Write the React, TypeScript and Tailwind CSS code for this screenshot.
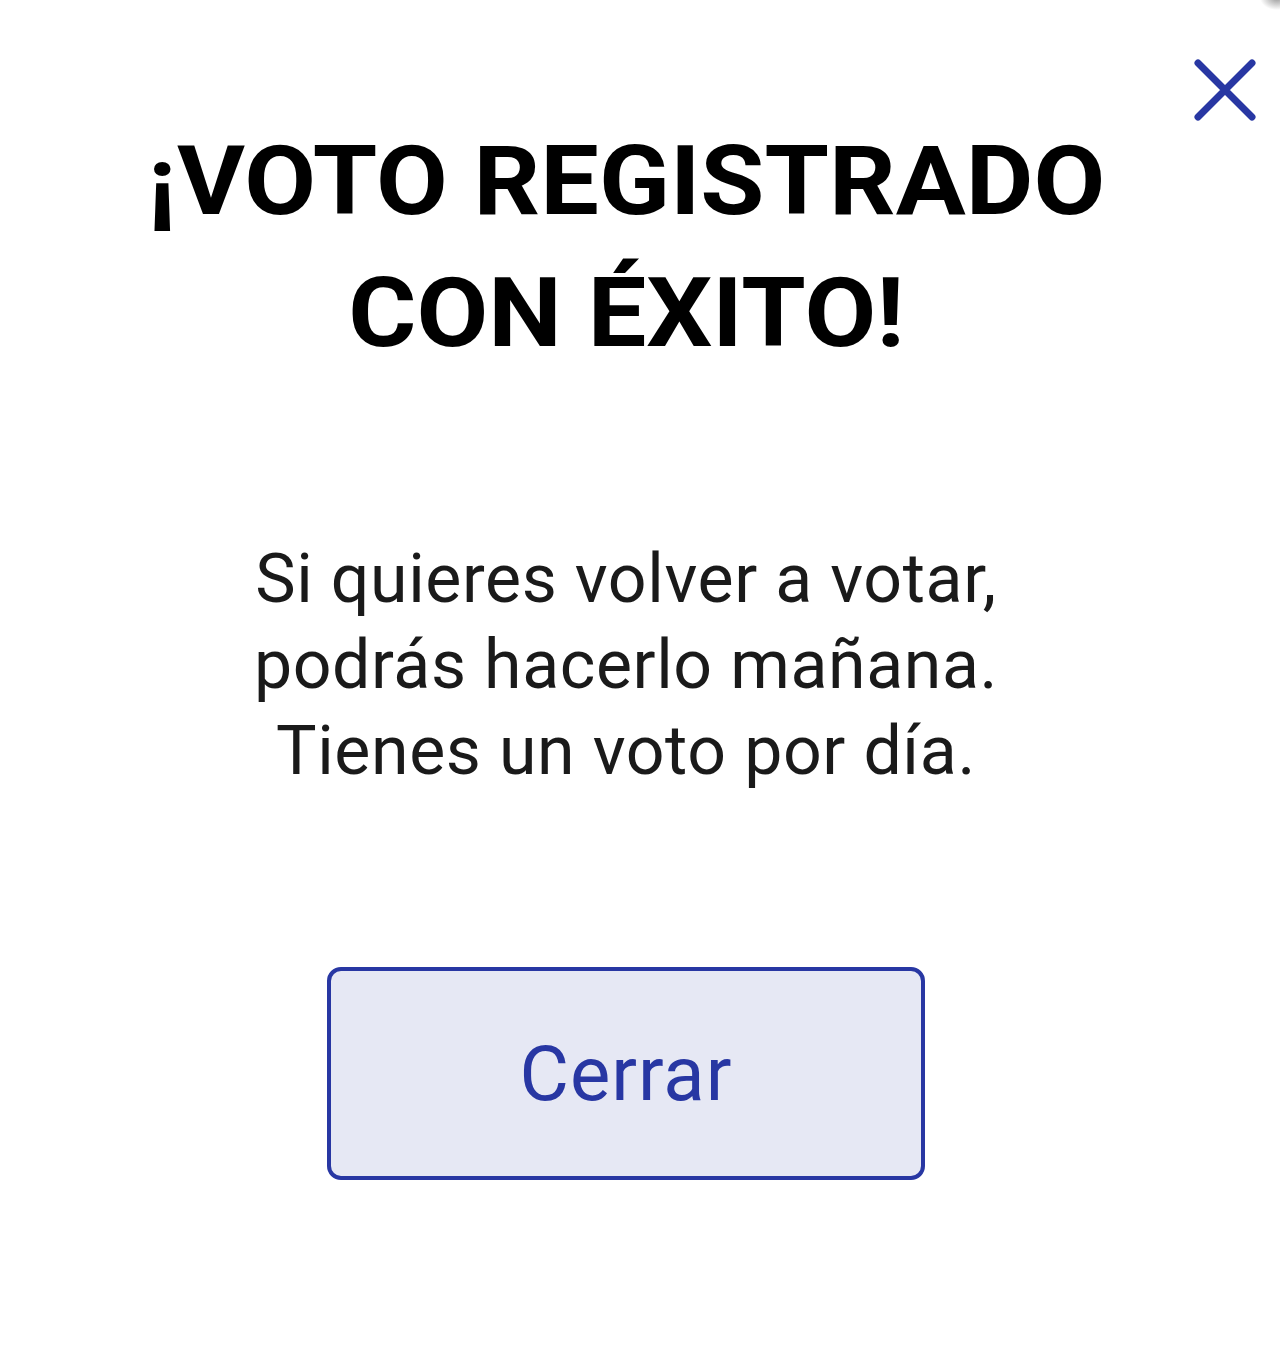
export default function App() {
  return (
    <div className="relative w-[1280px] h-[1361px] bg-white overflow-hidden font-['Roboto',sans-serif]">
      {/* shadow sliver in corner */}
      <div className="absolute right-[-14px] top-[-14px] w-[34px] h-[24px] rounded-full bg-[radial-gradient(closest-side,#9a9a9a,transparent)]" />

      {/* close icon */}
      <button className="absolute left-[1190px] top-[55px] w-[70px] h-[70px] flex items-center justify-center">
        <svg width="70" height="70" viewBox="0 0 70 70" fill="none">
          <path d="M8 8 L62 62 M62 8 L8 62" stroke="#2837a3" strokeWidth="7" strokeLinecap="round" />
        </svg>
      </button>

      <div className="flex flex-col items-center pr-[28px] pt-[115px]">
        <h1 className="text-[96px] leading-[132px] font-bold scale-x-[1.085] text-black text-center">
          ¡VOTO REGISTRADO
          <br />
          CON ÉXITO!
        </h1>

        <p className="mt-[157px] text-[68px] leading-[86px] tracking-[0.6px] text-[#1a1a1a] text-center">
          Si quieres volver a votar,
          <br />
          podrás hacerlo mañana.
          <br />
          Tienes un voto por día.
        </p>

        <button className="mt-[173px] w-[598px] h-[213px] rounded-[14px] border-[4px] border-[#2837a3] bg-[#e6e8f4] text-[76px] tracking-[1px] text-[#2837a3] flex items-center justify-center">
          Cerrar
        </button>
      </div>
    </div>
  )
}
